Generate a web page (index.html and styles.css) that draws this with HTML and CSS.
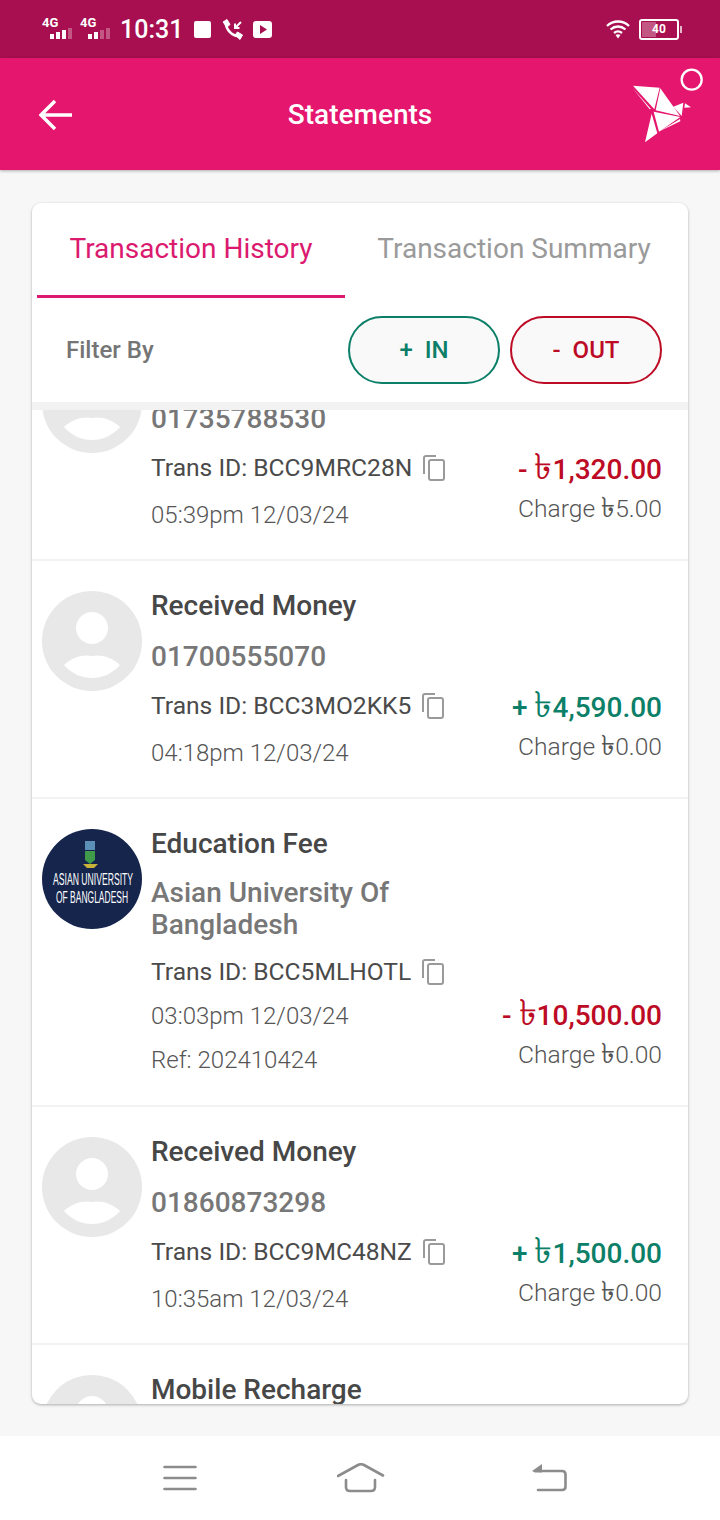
FILE: index.html
```html
<!DOCTYPE html>
<html>
	<head>
		<meta charset="utf-8">
		<title>Statements</title>
		<link rel="stylesheet" href="styles.css">
	</head>
	<body>
		<svg class="defs" width="0" height="0">
			<symbol id="person" viewBox="0 0 100 100">
				<circle cx="50" cy="50" r="50" fill="#e8e8e8"/>
				<circle cx="50" cy="37" r="16" fill="#fff"/>
				<path d="M22 74C30 66 42 63 50 65C58 63 70 66 78 74C70 83 60 87 50 87C40 87 30 83 22 74Z" fill="#fff"/>
			</symbol>
			<symbol id="copy" viewBox="0 0 24 28">
				<path d="M14 2H4Q2 2 2 4V20" fill="none" stroke="#9a9a9a" stroke-width="2"/>
				<rect x="7" y="6" width="15" height="20" rx="2" fill="none" stroke="#9a9a9a" stroke-width="2"/>
			</symbol>
		</svg>

		<div class="status">
			<div class="signal">
				<span class="net">4G</span>
				<svg width="26" height="12" viewBox="0 0 26 12"><rect x="1" y="7" width="4" height="5" fill="#fff"/><rect x="7" y="5" width="4" height="7" fill="#fff"/><rect x="13" y="3" width="4" height="9" fill="#fff"/><rect x="19" y="1" width="4" height="11" fill="#fff" opacity=".3"/></svg>
			</div>
			<div class="signal">
				<span class="net">4G</span>
				<svg width="26" height="12" viewBox="0 0 26 12"><rect x="1" y="7" width="4" height="5" fill="#fff"/><rect x="7" y="5" width="4" height="7" fill="#fff"/><rect x="13" y="3" width="4" height="9" fill="#fff" opacity=".3"/><rect x="19" y="1" width="4" height="11" fill="#fff" opacity=".3"/></svg>
			</div>
			<span class="clock">10:31</span>
			<span class="stop"></span>
			<svg class="call" width="21" height="21" viewBox="0 0 21 21">
				<path d="M3.500 3C4 11 10 17 18 17.500" fill="none" stroke="#fff" stroke-width="2.600"/>
				<path d="M1 3L5 0.500L8 5.500L5 8ZM13 16L15.500 13L20.500 16L18 20.500Z" fill="#fff" stroke="#fff" stroke-linejoin="round"/>
				<path d="M19 3L13.500 8.500M13 4.500V9H17.500" fill="none" stroke="#fff" stroke-width="2"/>
			</svg>
			<svg class="play" width="19" height="17" viewBox="0 0 19 17"><path d="M3 0H16Q19 0 19 3V14Q19 17 16 17H3Q0 17 0 14V3Q0 0 3 0ZM7 4V13L14 8.500Z" fill="#fff" fill-rule="evenodd"/></svg>
			<span class="spacer"></span>
			<svg class="wifi" width="24" height="19" viewBox="0 0 24 19">
				<path d="M1 6C7 0 17 0 23 6M4.500 9.500C9 5.500 15 5.500 19.500 9.500M8 13C10.500 11 13.500 11 16 13" fill="none" stroke="#fff" stroke-width="2.300"/>
				<path d="M9.500 15L12 18.500L14.500 15Q12 13.500 9.500 15Z" fill="#fff"/>
			</svg>
			<div class="battery">
				<div class="battery-fill"></div>
				<span class="battery-num">40</span>
			</div>
			<span class="battery-tip"></span>
		</div>

		<div class="header">
			<svg class="back" width="34" height="32" viewBox="0 0 34 32">
				<path d="M33 16H3M16 2L2 16L16 30" fill="none" stroke="#fff" stroke-width="3.400"/>
			</svg>
			<h1 class="title">Statements</h1>
			<svg class="bird" width="85" height="85" viewBox="0 0 255 255">
				<path d="M24 62L104 68L88 133ZM22 68L78 132L74 133ZM106 70L165 153L92 136ZM86 140L166 156L102 200ZM80 146L97 205L60 232ZM104 199L165 162L166 169ZM145 125L175 113L170 153ZM180 115L198 127L178 128Z" fill="#fff"/>
				<circle cx="200" cy="44" r="30" fill="none" stroke="#fff" stroke-width="7"/>
			</svg>
		</div>

		<div class="main">
			<div class="card">
				<div class="tabs">
					<div class="tab tab-active">Transaction History</div>
					<div class="tab tab-other">Transaction Summary</div>
				</div>
				<div class="filter">
					<span class="filter-label">Filter By</span>
					<button class="pill pill-in">+&nbsp; IN</button>
					<button class="pill pill-out">-&nbsp; OUT</button>
				</div>
				<div class="list">
					<div class="list-inner">
						<div class="row">
							<svg class="avatar"><use href="#person"/></svg>
							<div class="info">
								<div class="what what-hidden"></div>
								<div class="who">01735788530</div>
								<div class="trans">Trans ID: BCC9MRC28N <svg class="copy"><use href="#copy"/></svg></div>
								<div class="when">05:39pm 12/03/24</div>
							</div>
							<div class="money">
								<div class="amount out">- <span class="taka">৳</span>1,320.00</div>
								<div class="charge">Charge <span class="taka">৳</span>5.00</div>
							</div>
						</div>
						<div class="row">
							<svg class="avatar"><use href="#person"/></svg>
							<div class="info">
								<div class="what">Received Money</div>
								<div class="who">01700555070</div>
								<div class="trans">Trans ID: BCC3MO2KK5 <svg class="copy"><use href="#copy"/></svg></div>
								<div class="when">04:18pm 12/03/24</div>
							</div>
							<div class="money">
								<div class="amount in">+ <span class="taka">৳</span>4,590.00</div>
								<div class="charge">Charge <span class="taka">৳</span>0.00</div>
							</div>
						</div>
						<div class="row row-tall">
							<svg class="avatar" viewBox="0 0 100 100">
								<circle cx="50" cy="50" r="50" fill="#15254c"/>
								<rect x="43" y="12" width="10" height="9" fill="#5b8fb8"/>
								<path d="M43 22H53V31L48 35L43 31Z" fill="#3f9a4a"/>
								<path d="M41 35H56L52 39H45Z" fill="#c9b23a"/>
								<text class="logo-text" transform="translate(11 56) scale(.54 1)">ASIAN UNIVERSITY</text>
								<text class="logo-text" transform="translate(14 74) scale(.53 1)">OF BANGLADESH</text>
							</svg>
							<div class="info">
								<div class="what">Education Fee</div>
								<div class="who who-name">Asian University Of Bangladesh</div>
								<div class="trans">Trans ID: BCC5MLHOTL <svg class="copy"><use href="#copy"/></svg></div>
								<div class="when when-tight">03:03pm 12/03/24</div>
								<div class="when when-tight">Ref: 202410424</div>
							</div>
							<div class="money">
								<div class="amount out">- <span class="taka">৳</span>10,500.00</div>
								<div class="charge">Charge <span class="taka">৳</span>0.00</div>
							</div>
						</div>
						<div class="row">
							<svg class="avatar"><use href="#person"/></svg>
							<div class="info">
								<div class="what">Received Money</div>
								<div class="who">01860873298</div>
								<div class="trans">Trans ID: BCC9MC48NZ <svg class="copy"><use href="#copy"/></svg></div>
								<div class="when">10:35am 12/03/24</div>
							</div>
							<div class="money">
								<div class="amount in">+ <span class="taka">৳</span>1,500.00</div>
								<div class="charge">Charge <span class="taka">৳</span>0.00</div>
							</div>
						</div>
						<div class="row">
							<svg class="avatar"><use href="#person"/></svg>
							<div class="info">
								<div class="what">Mobile Recharge</div>
							</div>
						</div>
					</div>
				</div>
			</div>
		</div>

		<div class="navbar">
			<svg class="nav-menu" width="34" height="26" viewBox="0 0 34 26"><path d="M1.500 2H32.500M1.500 13H32.500M1.500 24H32.500" stroke="#8c8c8c" stroke-width="2.600" stroke-linecap="round"/></svg>
			<svg class="nav-home" width="48" height="30" viewBox="0 0 48 30"><path d="M1 13L21 2Q24 0.500 27 2L46 12.500M9 17V24Q9 28 13 28H34Q38 28 38 24V17" fill="none" stroke="#8c8c8c" stroke-width="2.600" stroke-linecap="round"/></svg>
			<svg class="nav-back" width="35" height="28" viewBox="0 0 35 28"><path d="M8 7H30Q33.500 7 33.500 10.500V22.500Q33.500 26 30 26H6" fill="none" stroke="#8c8c8c" stroke-width="2.600" stroke-linecap="round"/><path d="M0 7L10 0V8.500H3Z" fill="#8c8c8c"/></svg>
		</div>
	</body>
</html>
```

FILE: styles.css
```css
html, body {
	margin: 0;
	padding: 0;
	width: 720px;
	height: 1520px;
	overflow: hidden;
	background: #f7f7f7;
	font-family: Roboto, "Noto Sans", sans-serif;
}
body {
	display: flex;
	flex-direction: column;
}
.defs {
	display: none;
}

/* status bar */
.status {
	height: 58px;
	flex: none;
	background: #a80f50;
	color: #fff;
	display: flex;
	align-items: center;
	padding: 0 38px 0 42px;
	box-sizing: border-box;
}
.signal {
	width: 38px;
	display: flex;
	flex-direction: column;
}
.net {
	font-size: 13px;
	font-weight: 700;
	line-height: 13px;
	margin-top: -4px;
}
.signal svg {
	margin: -2px 0 0 7px;
}
.clock {
	font-size: 25px;
	font-weight: 500;
	margin-left: 2px;
}
.stop {
	width: 17px;
	height: 17px;
	background: #fff;
	border-radius: 2px;
	margin-left: 11px;
}
.call {
	margin-left: 11px;
}
.play {
	margin-left: 10px;
}
.spacer {
	flex: 1;
}
.battery {
	width: 36px;
	height: 17px;
	margin-left: 9px;
	border: 2px solid #fff;
	border-radius: 3px;
	display: flex;
	align-items: center;
	justify-content: center;
}
.battery-fill {
	position: absolute;
	width: 14px;
	height: 15px;
	margin-right: 21px;
	background: rgba(255, 255, 255, .3);
}
.battery-num {
	position: relative;
	font-size: 12px;
	font-weight: 700;
}
.battery-tip {
	width: 2px;
	height: 7px;
	margin-left: 1px;
	background: #fff;
	opacity: .7;
}

/* header */
.header {
	height: 112px;
	flex: none;
	padding-top: 1px;
	box-sizing: border-box;
	background: #e4166e;
	display: flex;
	align-items: center;
	justify-content: center;
	position: relative;
	box-shadow: 0 1px 3px rgba(0, 0, 0, .3);
}
.title {
	margin: 0;
	color: #fff;
	font-size: 28px;
	font-weight: 500;
}
.back {
	position: absolute;
	left: 39px;
	top: 41px;
}
.bird {
	position: absolute;
	left: 625px;
	top: 7px;
}

/* card */
.main {
	flex: 1;
	min-height: 0;
	padding: 33px 32px 32px;
}
.card {
	height: 100%;
	background: #fff;
	border-radius: 9px;
	box-shadow: 0 1px 3px rgba(0, 0, 0, .3);
	overflow: hidden;
	display: flex;
	flex-direction: column;
}
.tabs {
	height: 95px;
	flex: none;
	padding: 0 5px;
	display: flex;
}
.tab {
	font-size: 28px;
	color: #9a9a9a;
	text-align: center;
	line-height: 92px;
	box-sizing: border-box;
}
.tab-active {
	width: 308px;
	color: #db1a6f;
	border-bottom: 3px solid #db1a6f;
}
.tab-other {
	flex: 1;
}
.filter {
	height: 104px;
	flex: none;
	display: flex;
	align-items: center;
	padding: 0 26px 0 34px;
	box-sizing: border-box;
}
.filter-label {
	flex: 1;
	font-size: 24px;
	font-weight: 500;
	color: #757575;
}
.pill {
	width: 152px;
	height: 68px;
	margin-left: 10px;
	padding: 0;
	border-radius: 34px;
	background: #f9f9f9;
	font-family: inherit;
	font-size: 24px;
	font-weight: 500;
}
.pill-in {
	color: #0b7f68;
	border: 2px solid #0b7f68;
}
.pill-out {
	color: #bd0b25;
	border: 2px solid #bd0b25;
}

/* list */
.list {
	flex: 1;
	min-height: 0;
	overflow: hidden;
	border-top: 8px solid #f2f2f2;
}
.list-inner {
	margin-top: -87px;
}
.row {
	display: flex;
	min-height: 238px;
	box-sizing: border-box;
	padding: 30px 26px 0 10px;
	border-bottom: 2px solid #f2f2f2;
}
.row-tall {
	min-height: 308px;
}
.avatar {
	width: 100px;
	height: 100px;
	flex: none;
	margin-right: 10px;
}
.logo-text {
	font-family: "Liberation Sans", sans-serif;
	font-size: 16px;
	fill: #fff;
}
.info {
	flex: 1;
	min-width: 0;
	margin-left: -1px;
	margin-top: -2px;
}
.what {
	font-size: 28px;
	font-weight: 500;
	color: #474747;
	line-height: 34px;
}
.what-hidden {
	height: 34px;
}
.who {
	font-size: 28px;
	font-weight: 500;
	color: #777;
	line-height: 32px;
	margin-top: 18px;
}
.who-name {
	margin-top: 16px;
	margin-bottom: -2px;
	width: 290px;
}
.trans {
	font-size: 24.600px;
	color: #4a4a4a;
	line-height: 32px;
	margin-top: 17px;
	display: flex;
	align-items: center;
	white-space: pre;
}
.copy {
	width: 24px;
	height: 28px;
	margin-left: 4px;
}
.when {
	font-size: 24px;
	font-weight: 300;
	color: #555;
	line-height: 32px;
	margin-top: 15px;
}
.when-tight {
	margin-top: 12px;
}
.money {
	flex: none;
	align-self: flex-end;
	text-align: right;
	padding-bottom: 34px;
}
.amount {
	font-size: 28px;
	font-weight: 500;
	line-height: 32px;
}
.taka {
	font-size: 1.300em;
	line-height: 0;
}
.in {
	color: #0b7f68;
}
.out {
	color: #bd0b25;
}
.charge {
	font-size: 24.600px;
	font-weight: 300;
	color: #555;
	line-height: 32px;
	margin-top: 7px;
}
.charge .taka {
	font-size: 1.120em;
}

/* bottom nav */
.navbar {
	height: 84px;
	flex: none;
	background: #fff;
	display: flex;
	align-items: center;
	padding-left: 163px;
}
.nav-home {
	margin-left: 140px;
}
.nav-back {
	margin-left: 147px;
}
```
